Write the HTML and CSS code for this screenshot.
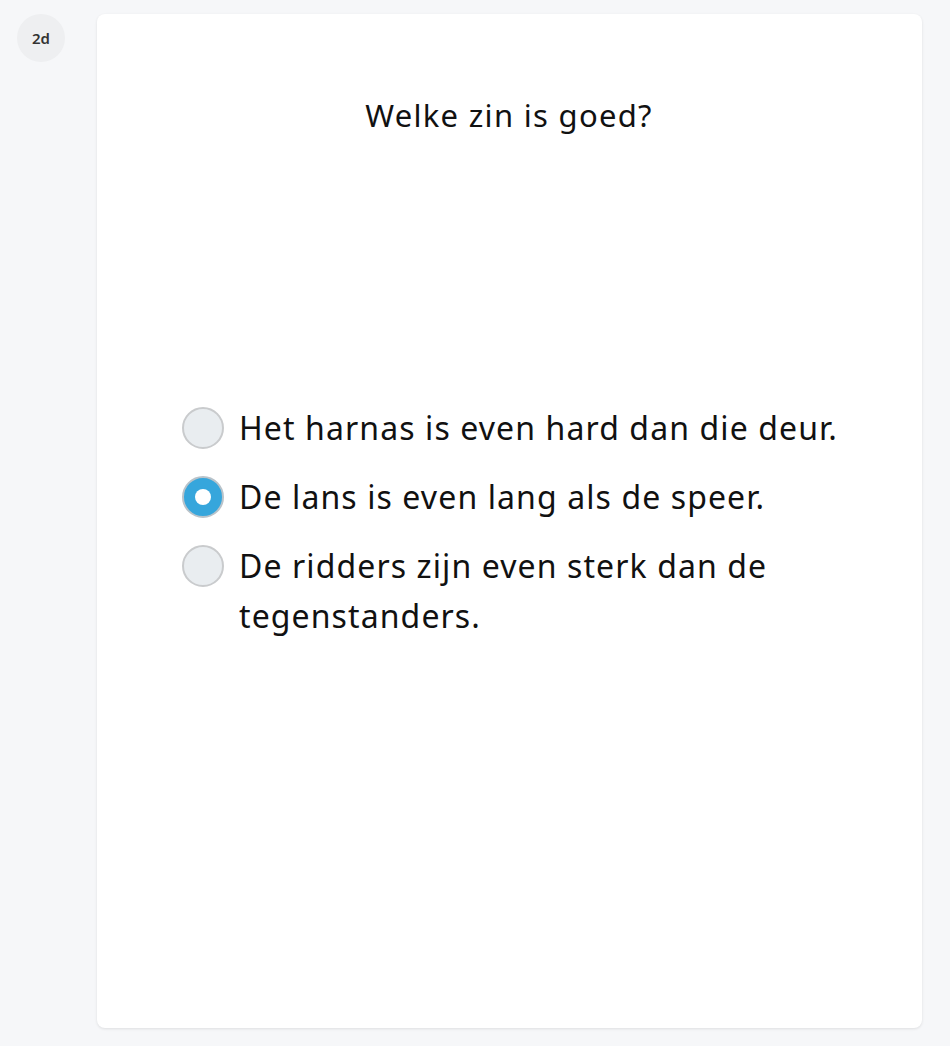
FILE: index.html
```html
<!DOCTYPE html>
<html lang="nl">
<head>
<meta charset="utf-8">
<link rel="stylesheet" href="styles.css">
</head>
<body>
<div class="page">
  <div class="side">
    <div class="badge">2d</div>
  </div>
  <div class="card">
    <h1 class="question">Welke zin is goed?</h1>
    <div class="options">
      <label class="option">
        <span class="radio"></span>
        <span class="text">Het harnas is even hard dan die deur.</span>
      </label>
      <label class="option">
        <span class="radio selected"></span>
        <span class="text">De lans is even lang als de speer.</span>
      </label>
      <label class="option">
        <span class="radio"></span>
        <span class="text">De ridders zijn even sterk dan de tegenstanders.</span>
      </label>
    </div>
  </div>
</div>
</body>
</html>
```

FILE: styles.css
```css
html, body {
  margin: 0;
  padding: 0;
  background: #f6f7f9;
}
body {
  font-family: "Noto Sans", "DejaVu Sans", sans-serif;
  color: #111;
}
.page {
  display: flex;
  align-items: flex-start;
  height: 1046px;
}
.side {
  width: 97px;
  flex: none;
  padding-top: 14px;
  padding-left: 17px;
  box-sizing: border-box;
}
.badge {
  width: 48px;
  height: 48px;
  border-radius: 50%;
  background: #eeeff1;
  color: #333;
  font-size: 15px;
  font-weight: 600;
  display: flex;
  align-items: center;
  justify-content: center;
}
.card {
  margin-top: 14px;
  width: 825px;
  height: 1014px;
  background: #fff;
  border-radius: 8px;
  box-shadow: 0 1px 3px rgba(0,0,0,0.10);
  box-sizing: border-box;
  padding: 84px 70px 0 85px;
}
.question {
  margin: 0;
  text-align: center;
  font-size: 31px;
  letter-spacing: 1.3px;
  font-weight: 400;
  line-height: 34px;
  padding-right: 16px;
}
.options {
  margin-top: 271px;
  display: flex;
  flex-direction: column;
  gap: 19px;
}
.option {
  display: flex;
  align-items: flex-start;
  gap: 15px;
  font-size: 32px;
  letter-spacing: 1.1px;
  line-height: 50px;
}
.radio {
  flex: none;
  width: 42px;
  height: 42px;
  margin-top: 4px;
  box-sizing: border-box;
  border-radius: 50%;
  border: 2px solid #c9cbcd;
  background: #e9edf0;
  position: relative;
}
.radio.selected {
  background: #36a6dc;
  border-color: #b9c3ca;
}
.radio.selected::after {
  content: "";
  position: absolute;
  left: 50%;
  top: 50%;
  width: 16px;
  height: 16px;
  margin: -8px 0 0 -8px;
  border-radius: 50%;
  background: #fff;
}
```
